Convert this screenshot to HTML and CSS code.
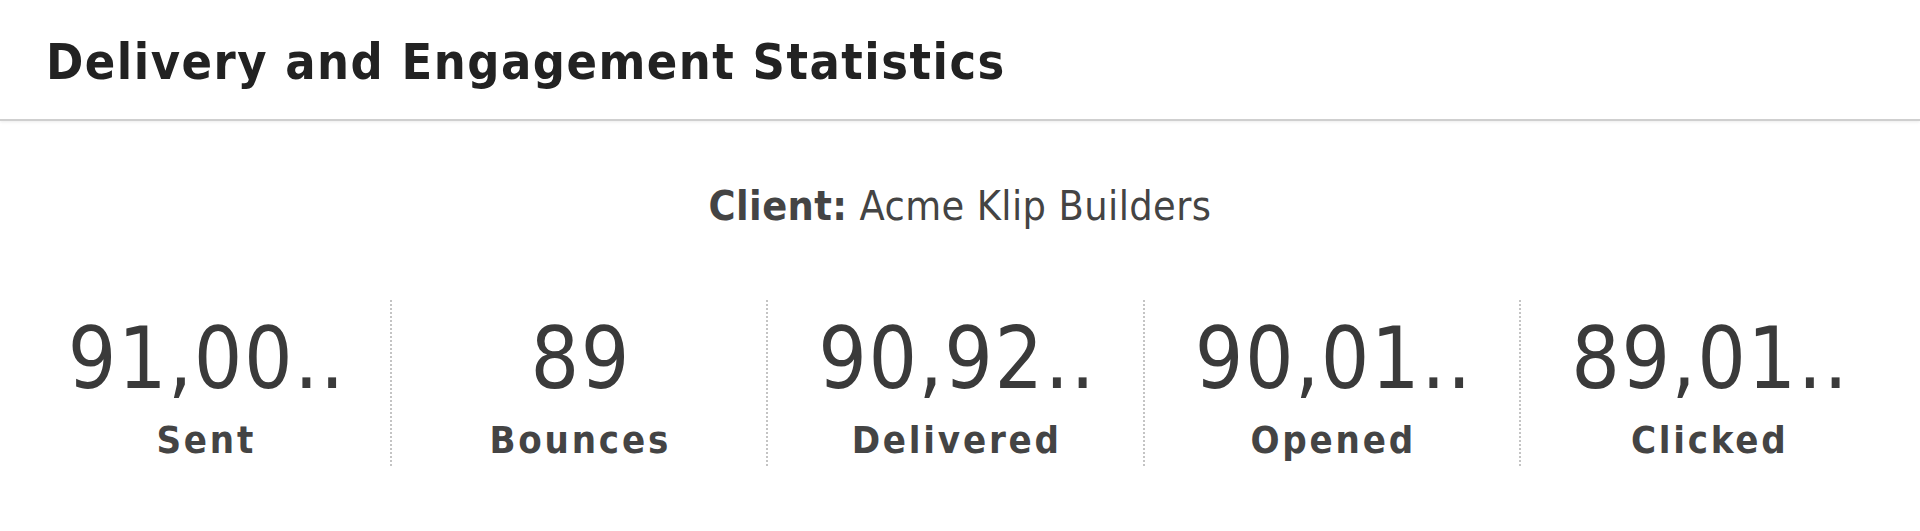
FILE: index.html
```html
<!DOCTYPE html>
<html lang="en">
  <head>
    <meta charset="UTF-8" />
    <meta name="viewport" content="width=device-width, initial-scale=1.0" />
    <title>Delivery and Engagement Statistics</title>
    <link rel="stylesheet" href="styles.css">
  </head>

  <body>
    <div class="klip">
      <div class="klip-header">
        <h1>Delivery and Engagement Statistics</h1>
      </div>

      <div class="klip-body">
        <p class="client"><b>Client:</b> Acme Klip Builders</p>

        <div class="stats">
          <div class="stat">
            <div class="value">91,00..</div>
            <div class="label">Sent</div>
          </div>
          <div class="stat">
            <div class="value">89</div>
            <div class="label">Bounces</div>
          </div>
          <div class="stat">
            <div class="value">90,92..</div>
            <div class="label">Delivered</div>
          </div>
          <div class="stat">
            <div class="value">90,01..</div>
            <div class="label">Opened</div>
          </div>
          <div class="stat">
            <div class="value">89,01..</div>
            <div class="label">Clicked</div>
          </div>
        </div>
      </div>
    </div>
  </body>
</html>
```

FILE: styles.css
```css
body {
  font-family: "DejaVu Sans Condensed", "DejaVu Sans", sans-serif;
  margin: 0;
  padding: 0;
  background-color: #fff;
  color: #3c3c3c;
}

.klip-header {
  padding: 37px 0 32px 46px;
  border-bottom: 2px solid #cfcfcf;
  box-shadow: 0 1px 3px rgba(0, 0, 0, 0.08);
}

.klip-header h1 {
  margin: 0;
  font-size: 50px;
  line-height: 50px;
  font-weight: bold;
  letter-spacing: 1.5px;
  color: #222;
}

/* body */

.client {
  margin: 65px 0 0;
  text-align: center;
  font-size: 41px;
  line-height: 41px;
  letter-spacing: 0.4px;
  color: #444;
}

.stats {
  display: grid;
  grid-template-columns: repeat(5, 376.5px);
  margin: 73px 0 0 13px;
}

.stat {
  padding: 16px 0 7px;
  text-align: center;
}

.stat:first-child {
  padding-left: 7px;
}

.stat + .stat {
  border-left: 2px dotted #c4c4c4;
}

.value {
  padding-left: 4px;
  font-size: 85px;
  line-height: 85px;
  letter-spacing: 1.5px;
  color: #3a3a3a;
}

.label {
  margin-top: 20px;
  padding-left: 3px;
  font-size: 38px;
  line-height: 38px;
  font-weight: bold;
  letter-spacing: 2.8px;
  color: #444;
}
```
